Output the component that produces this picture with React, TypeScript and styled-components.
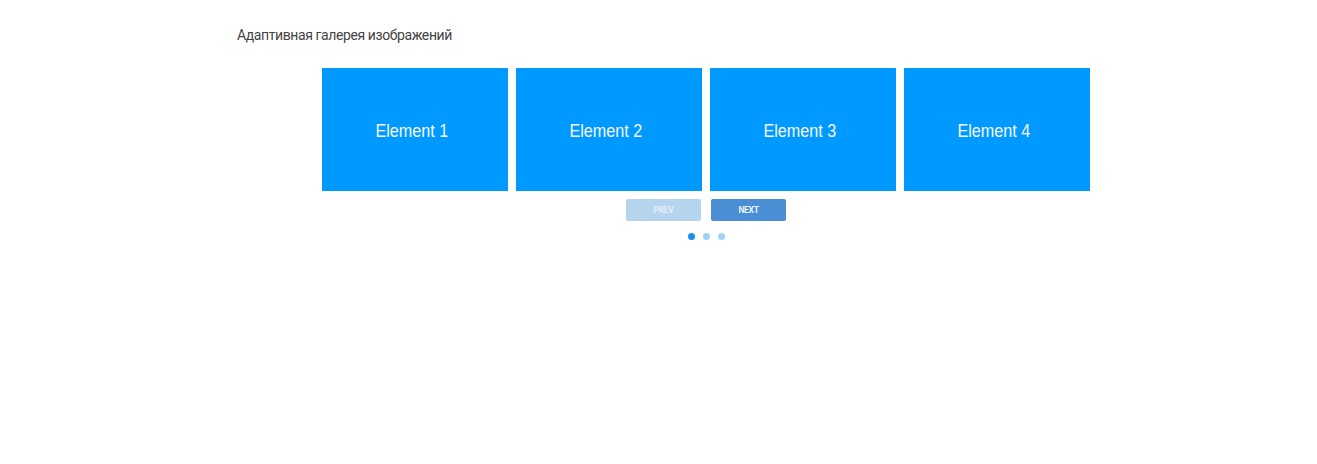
import React from "react";
import styled, { createGlobalStyle } from "styled-components";

const Global = createGlobalStyle`
  html, body { margin: 0; padding: 0; background: #ffffff; }
  body { font-family: Roboto, "Noto Sans", sans-serif; }
`;

const Page = styled.div`
  display: flex;
  flex-direction: column;
  align-items: flex-start;
  padding: 27px 0 0 237px;
  height: 437px;
`;

const Title = styled.h1`
  margin: 0;
  font-family: Roboto, "Noto Sans", sans-serif;
  font-weight: 400;
  font-size: 14px;
  line-height: 16px;
  color: #444444;
  letter-spacing: -0.4px;
`;

const Gallery = styled.div`
  margin: 25px 0 0 85px;
  width: 768px;
  display: flex;
  flex-direction: column;
  align-items: center;
`;

const Track = styled.div`
  display: grid;
  grid-template-columns: repeat(4, 186px);
  gap: 8px;
  width: 100%;
`;

const Card = styled.div`
  height: 123px;
  background: #0099ff;
  display: flex;
  align-items: center;
  justify-content: center;
`;

const CardLabel = styled.span`
  display: inline-block;
  color: #f4f9ff;
  font-family: "Liberation Sans", Arial, sans-serif;
  font-size: 19px;
  line-height: 22px;
  margin: 3px 6px 0 0;
  transform: scaleX(0.85);
`;

const Controls = styled.div`
  display: flex;
  gap: 10px;
  margin-top: 8px;
`;

const NavButton = styled.button<{ $disabled?: boolean }>`
  width: 75px;
  height: 22px;
  border: none;
  border-radius: 2px;
  padding: 0;
  background: ${(p) => (p.$disabled ? "#b5d4ee" : "#4a8fd4")};
  color: ${(p) => (p.$disabled ? "#e4eef8" : "#e8f1fb")};
  font-family: Roboto, "Noto Sans", sans-serif;
  font-weight: 700;
  font-size: 8.5px;
  letter-spacing: -0.3px;
  cursor: pointer;
`;

const Dots = styled.div`
  display: flex;
  gap: 8px;
  margin-top: 12px;
`;

const Dot = styled.span<{ $active?: boolean }>`
  width: 7px;
  height: 7px;
  border-radius: 50%;
  background: ${(p) => (p.$active ? "#1a90ee" : "#9fd3f6")};
`;

export default function App() {
  const items = ["Element 1", "Element 2", "Element 3", "Element 4"];
  return (
    <>
      <Global />
      <Page>
        <Title>Адаптивная галерея изображений</Title>
        <Gallery>
          <Track>
            {items.map((t) => (
              <Card key={t}>
                <CardLabel>{t}</CardLabel>
              </Card>
            ))}
          </Track>
          <Controls>
            <NavButton $disabled>PREV</NavButton>
            <NavButton>NEXT</NavButton>
          </Controls>
          <Dots>
            <Dot $active />
            <Dot />
            <Dot />
          </Dots>
        </Gallery>
      </Page>
    </>
  );
}
